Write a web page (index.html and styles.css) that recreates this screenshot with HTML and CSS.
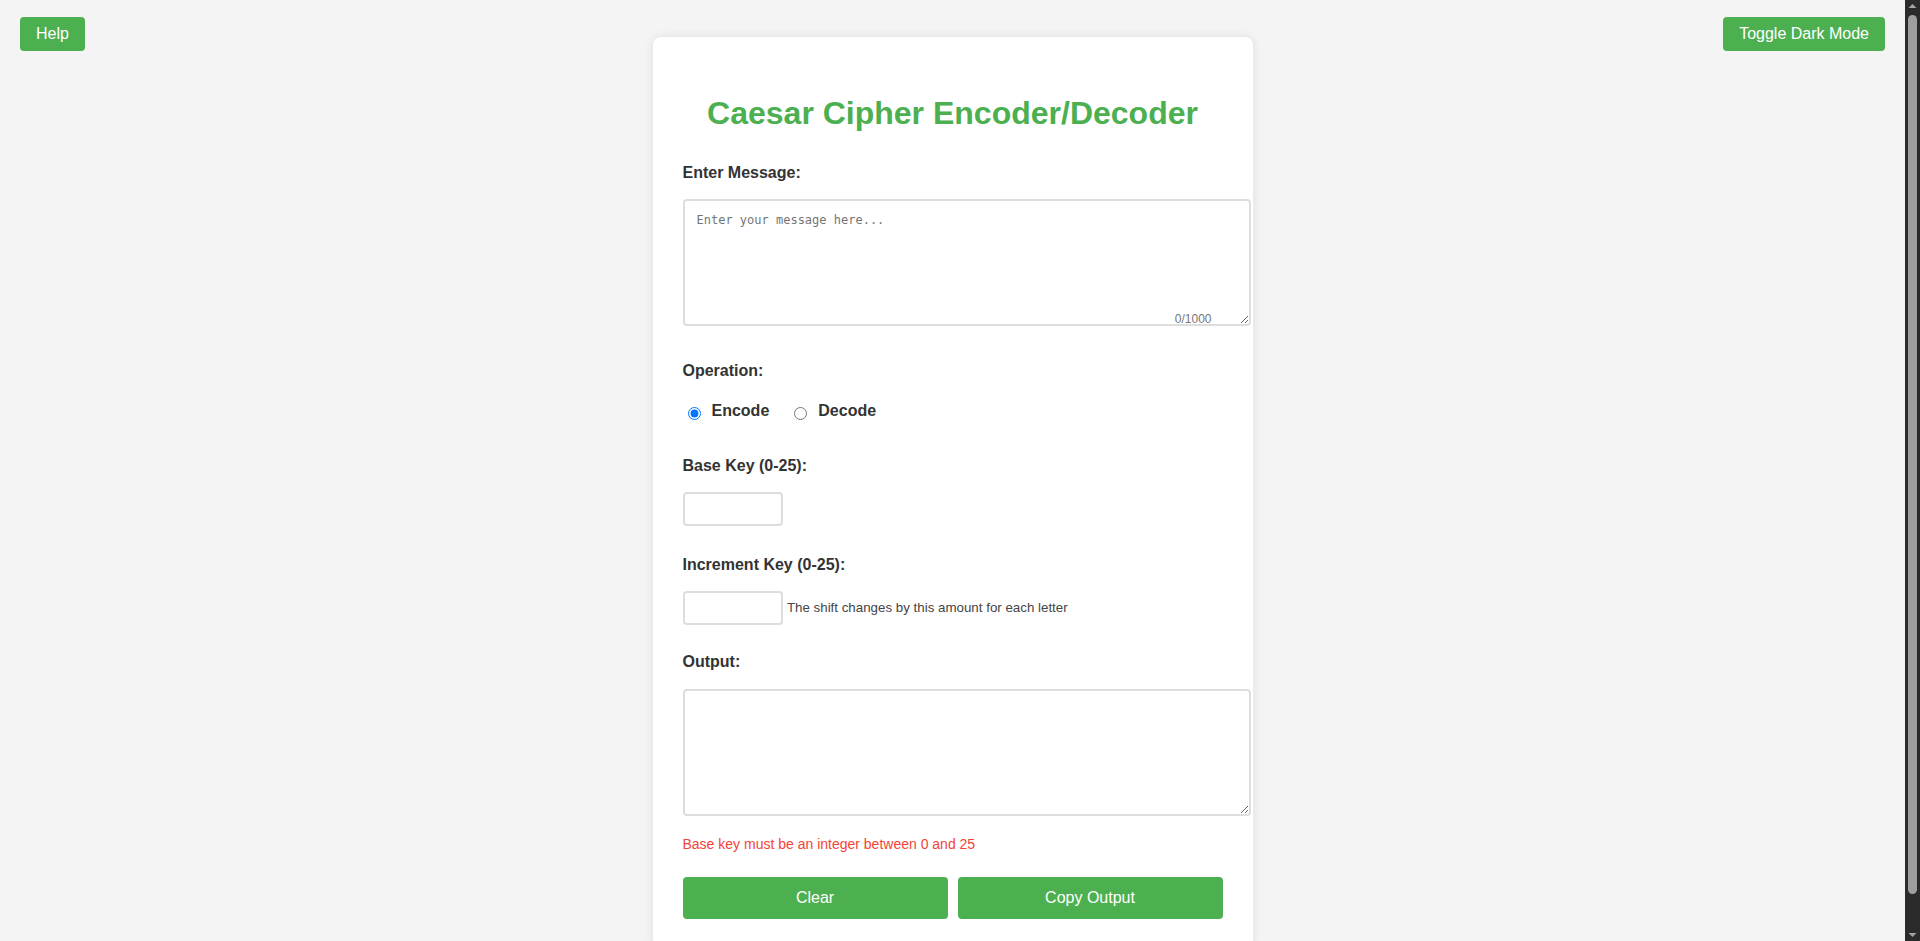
FILE: index.html
```html
<!DOCTYPE html>
<html lang="en">
<head>
<meta charset="utf-8">
<title>Caesar Cipher Encoder/Decoder</title>
<link rel="stylesheet" href="styles.css">
</head>
<body>
<button class="corner-btn help-btn" type="button">Help</button>
<button class="corner-btn theme-btn" type="button">Toggle Dark Mode</button>

<main class="card">
  <h1 class="title">Caesar Cipher Encoder/Decoder</h1>

  <div class="group">
    <label class="field-label" for="message">Enter Message:</label>
    <div class="message-wrap">
      <textarea id="message" class="text-box" placeholder="Enter your message here..."></textarea>
      <span class="counter">0/1000</span>
    </div>
  </div>

  <div class="group">
    <div class="field-label">Operation:</div>
    <div class="radio-row"><label class="radio-option"><input type="radio" name="op" checked>Encode</label><label class="radio-option"><input type="radio" name="op">Decode</label></div>
  </div>

  <div class="group group-base">
    <label class="field-label" for="baseKey">Base Key (0-25):</label>
    <input id="baseKey" class="key-input" type="text">
  </div>

  <div class="group">
    <label class="field-label" for="incKey">Increment Key (0-25):</label>
    <div class="inline-row">
      <input id="incKey" class="key-input" type="text">
      <small class="hint">The shift changes by this amount for each letter</small>
    </div>
  </div>

  <div class="group group-output">
    <label class="field-label output-label" for="output">Output:</label>
    <textarea id="output" class="text-box" readonly></textarea>
  </div>

  <div class="error-msg">Base key must be an integer between 0 and 25</div>

  <div class="actions">
    <button class="action-btn" type="button">Clear</button>
    <button class="action-btn" type="button">Copy Output</button>
  </div>
</main>

<div class="fake-scrollbar" aria-hidden="true">
  <svg class="scroll-arrow scroll-arrow-up" width="15" height="15" viewBox="0 0 15 15"><polygon points="3.5,8 7.5,4 11.5,8" fill="#a3a3a3"/></svg>
  <div class="scroll-thumb"></div>
  <svg class="scroll-arrow scroll-arrow-down" width="15" height="15" viewBox="0 0 15 15"><polygon points="3.5,7 7.5,11 11.5,7" fill="#a3a3a3"/></svg>
</div>
</body>
</html>
```

FILE: styles.css
```css
html {
  background: #f4f4f4;
}

body {
  position: relative;
  margin: 0 15px 0 0;
  padding: 37px 0 26px;
  background: #f4f4f4;
  font-family: "Liberation Sans", Arial, sans-serif;
  font-size: 16px;
  color: #333;
}

.fake-scrollbar {
  position: fixed;
  top: 0;
  right: 0;
  width: 15px;
  height: 100vh;
  background: #2b2b2b;
  display: flex;
  flex-direction: column;
  align-items: center;
}

.scroll-arrow {
  display: block;
  flex: none;
}

.scroll-thumb {
  width: 9px;
  height: 879px;
  border-radius: 5px;
  background: #9f9f9f;
}

.scroll-arrow-down {
  margin-top: auto;
}

.corner-btn {
  position: absolute;
  top: 17px;
  padding: 8px 16px;
  border: none;
  border-radius: 4px;
  background: #4caf50;
  color: #fff;
  font-family: "Liberation Sans", Arial, sans-serif;
  font-size: 16px;
  line-height: normal;
  cursor: pointer;
}

.help-btn {
  left: 20px;
}

.theme-btn {
  right: 20px;
}

.card {
  display: block;
  box-sizing: border-box;
  width: 600px;
  margin: 0 auto;
  padding: 30px;
  background: #fff;
  border-radius: 8px;
  box-shadow: 0 0 10px rgba(0, 0, 0, 0.1);
}

.title {
  margin: 27.5px 0 32.2px;
  text-align: center;
  color: #4caf50;
  font-size: 32px;
  font-weight: bold;
  line-height: normal;
}

.group {
  margin-bottom: 28.6px;
}

.field-label {
  display: block;
  margin-bottom: 17px;
  font-weight: bold;
  font-size: 16px;
  line-height: normal;
  color: #333;
}

.output-label {
  margin-bottom: 18px;
}

.message-wrap {
  position: relative;
  padding-bottom: 7.5px;
}

.text-box {
  display: block;
  width: 100%;
  height: 99px;
  margin: 0;
  padding: 12px;
  border: 2px solid #ddd;
  border-radius: 4px;
  background: #fff;
  font-family: "DejaVu Sans Mono", "Liberation Mono", monospace;
  font-size: 12px;
  color: #333;
  outline: none;
}

.text-box::placeholder {
  color: #757575;
}

.counter {
  position: absolute;
  right: 11px;
  bottom: 7.7px;
  font-size: 12px;
  line-height: normal;
  color: #777;
}

.radio-row {
  display: flex;
  padding: 5.6px 0 7.8px;
}

.radio-option {
  margin-right: 20px;
  font-weight: bold;
  font-size: 16px;
  line-height: normal;
  color: #333;
}

.radio-option input {
  width: 13px;
  height: 13px;
  margin: 3px 11px 0 5px;
  vertical-align: middle;
}

.key-input {
  display: block;
  box-sizing: border-box;
  width: 100px;
  height: 34px;
  margin: 0;
  padding: 6px 10px;
  border: 2px solid #ddd;
  border-radius: 4px;
  font-family: "Liberation Sans", Arial, sans-serif;
  font-size: 16px;
  outline: none;
}

.group-base {
  margin-bottom: 30.1px;
}

.inline-row {
  display: flex;
  align-items: center;
}

.hint {
  margin-left: 4.4px;
  font-size: 13.33px;
  line-height: normal;
  color: #444;
}

.group-output {
  margin-bottom: 19.3px;
}

.error-msg {
  margin-bottom: 25.4px;
  font-size: 14px;
  line-height: normal;
  color: #f44336;
}

.actions {
  display: flex;
  gap: 10px;
}

.action-btn {
  flex: 1;
  padding: 12px;
  border: none;
  border-radius: 4px;
  background: #4caf50;
  color: #fff;
  font-family: "Liberation Sans", Arial, sans-serif;
  font-size: 16px;
  line-height: normal;
  cursor: pointer;
}
```
